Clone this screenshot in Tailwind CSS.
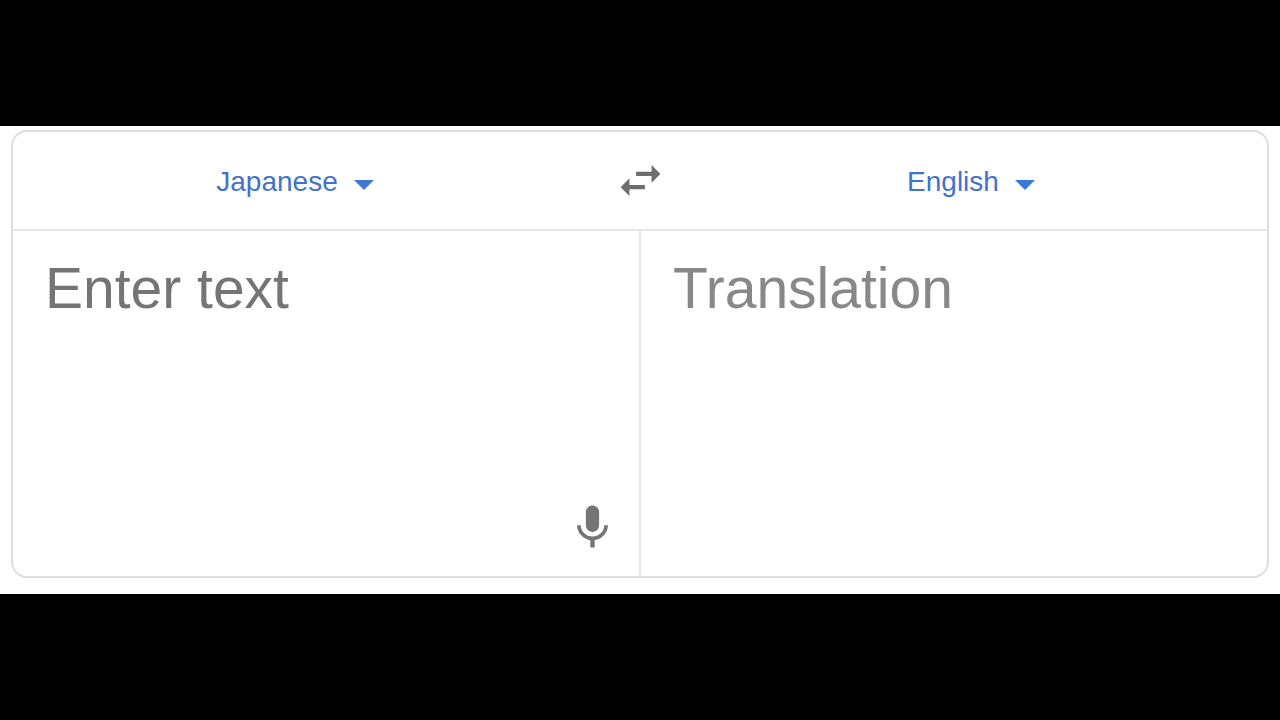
<!DOCTYPE html>
<html lang="en">
<head>
    <meta charset="UTF-8">
    <meta name="viewport" content="width=device-width, initial-scale=1.0">
    <title>Translate</title>
    <script src="https://cdn.jsdelivr.net/npm/@tailwindcss/browser@4"></script>
</head>
<body class="bg-black min-h-screen flex flex-col justify-center font-['Liberation_Sans',Arial,sans-serif]">
    <main class="bg-white px-[11px] pt-1 pb-4">
        <div class="border-2 border-[#dedede] rounded-2xl overflow-hidden">
            <!-- Language bar -->
            <div class="grid grid-cols-[1fr_auto_1fr] items-center h-[99px] border-b-2 border-[#e5e5e5]">
                <div class="flex justify-center">
                    <label class="relative flex items-center pt-0.5">
                        <select id="sourceLang" aria-label="Source language" class="appearance-none field-sizing-content bg-transparent pr-9 text-[28px] leading-8 text-[#4272cb] cursor-pointer">
                            <option selected>Japanese</option>
                            <option>English</option>
                        </select>
                        <svg class="absolute right-0 top-4 w-5 h-3 pointer-events-none" viewBox="0 0 20 12" fill="#3c78d8" aria-hidden="true"><path d="M0 0h20L10 10z"/></svg>
                    </label>
                </div>
                <button id="swap" type="button" aria-label="Swap languages" class="flex justify-center w-[126px] text-[#6e6e6e] cursor-pointer">
                    <svg class="w-[53px] h-[53px]" viewBox="0 0 24 24" fill="currentColor" aria-hidden="true"><path d="M6.99 11L3 15l3.99 4v-3H14v-2H6.99v-3zM21 9l-3.99-4v3H10v2h7.01v3L21 9z"/></svg>
                </button>
                <div class="flex justify-center pr-7">
                    <label class="relative flex items-center pt-0.5">
                        <select id="targetLang" aria-label="Target language" class="appearance-none field-sizing-content bg-transparent pr-9 text-[28px] leading-8 text-[#4272cb] cursor-pointer">
                            <option selected>English</option>
                            <option>Japanese</option>
                        </select>
                        <svg class="absolute right-0 top-4 w-5 h-3 pointer-events-none" viewBox="0 0 20 12" fill="#3c78d8" aria-hidden="true"><path d="M0 0h20L10 10z"/></svg>
                    </label>
                </div>
            </div>

            <!-- Text panels -->
            <div class="grid grid-cols-[1fr_2px_1fr]">
                <div class="flex flex-col">
                    <textarea id="source" aria-label="Source text" placeholder="Enter text" class="block w-full h-[270px] px-8 pt-[25px] resize-none outline-none text-[57px] leading-16 text-[#222222] placeholder:text-[#757575]"></textarea>
                    <div class="flex justify-end pr-5 pb-[22px]">
                        <button type="button" aria-label="Translate by voice" class="text-[#757575] cursor-pointer">
                            <svg class="w-[53px] h-[53px]" viewBox="0 0 24 24" fill="currentColor" aria-hidden="true"><path d="M12 14c1.66 0 2.99-1.34 2.99-3L15 5c0-1.66-1.34-3-3-3S9 3.34 9 5v6c0 1.66 1.34 3 3 3zm5.3-3c0 3-2.54 5.1-5.3 5.1S6.7 14 6.7 11H5c0 3.41 2.72 6.23 6 6.72V21h2v-3.28c3.28-.48 6-3.3 6-6.72h-1.7z"/></svg>
                        </button>
                    </div>
                </div>
                <div class="bg-[#e5e5e5]"></div>
                <div class="px-8 pt-[25px]">
                    <p class="text-[57px] leading-16 text-[#888888]">Translation</p>
                </div>
            </div>
        </div>
    </main>

    <script>
        document.getElementById("swap").addEventListener("click", function() {
            const source = document.getElementById("sourceLang");
            const target = document.getElementById("targetLang");
            const previous = source.value;
            source.value = target.value;
            target.value = previous;
        });
    </script>
</body>
</html>
